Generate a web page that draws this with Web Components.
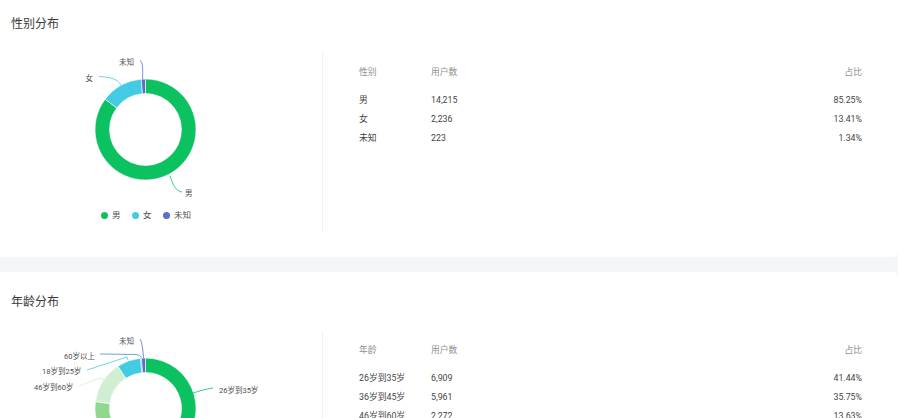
<!DOCTYPE html>
<html lang="zh">
<head>
<meta charset="utf-8">
<style>
html,body{margin:0;height:418px;overflow:hidden;background:#fff}
body{font-family:Roboto,"Noto Sans CJK SC",sans-serif;color:#333}
</style>
</head>
<body>
<stat-page>
  <stat-card title-text="性别分布">
    <donut-chart slot="chart" config="gender"></donut-chart>
    <stat-table slot="table" head="性别" config="gender"></stat-table>
  </stat-card>
  <stat-card title-text="年龄分布">
    <donut-chart slot="chart" config="age"></donut-chart>
    <stat-table slot="table" head="年龄" config="age"></stat-table>
  </stat-card>
</stat-page>
<script>
const DATA={
 gender:{
  top:53,cx:145.5,cy:129.5,legend:true,
  rows:[["男","14,215","85.25%"],["女","2,236","13.41%"],["未知","223","1.34%"]],
  segs:[[85.25,"#0cc160"],[13.41,"#43cbe3"],[1.34,"#5b6fc9"]],
  labels:[
   {t:"男",x:185,y:196,d:"M170 176C173 184 175 191 182 192",c:"#0cc160"},
   {t:"女",x:85.5,y:81,d:"M121 85C118 79 110 77 99 76.500",c:"#43cbe3"},
   {t:"未知",x:119,y:65,d:"M142.500 79C143 70 143 62 140 60.500",c:"#5b6fc9"}
  ]},
 age:{
  top:331,cx:145.5,cy:408.5,legend:false,
  rows:[["26岁到35岁","6,909","41.44%"],["36岁到45岁","5,961","35.75%"],["46岁到60岁","2,272","13.63%"]],
  segs:[[41.44,"#0cc160"],[35.75,"#8fd98f"],[13.63,"#d0eed2"],[7.6,"#43cbe3"],[0.3,"#3f8fd0"],[1.28,"#5b6fc9"]],
  labels:[
   {t:"26岁到35岁",x:219,y:393,d:"M193 393L205 389.500L213 388",c:"#0cc160"},
   {t:"46岁到60岁",x:34,y:390,d:"M79 386L100 378L105 380",c:"#d0eed2"},
   {t:"18岁到25岁",x:42,y:374,d:"M87 370L127 357L128 360",c:"#43cbe3"},
   {t:"60岁以上",x:64,y:359,d:"M100 354L136 354.500C139 355 141 356 141.500 358",c:"#3f8fd0"},
   {t:"未知",x:119,y:344,d:"M140 339C142 342 143 350 143.500 358",c:"#5b6fc9"}
  ]}
};
class StatPage extends HTMLElement{
 constructor(){super();this.attachShadow({mode:"open"}).innerHTML=`<style>
 :host{display:block;width:898px;height:418px;overflow:hidden;background:#f5f6f8}
 .scroll{display:flex;flex-direction:column;gap:15px;margin-top:-6px}
 ::slotted(stat-card){flex:none}
 </style><div class="scroll"><slot></slot></div>`}
}
class StatCard extends HTMLElement{
 constructor(){super();const r=this.attachShadow({mode:"open"});r.innerHTML=`<style>
 :host{display:block;height:263px;background:#fff;border-radius:0 5px 5px 0;box-sizing:border-box}
 h2{margin:0;padding:23px 0 0 11px;height:59px;box-sizing:border-box;font:400 12px/15px Roboto,"Noto Sans CJK SC",sans-serif;color:#3a3a3a}
 .body{display:flex;height:180px}
 .left{width:322px;flex:none;border-right:1px solid #eef0f2;height:180px}
 .right{flex:1;min-width:0;padding:0 36px}
 </style><h2></h2><div class="body"><div class="left"><slot name="chart"></slot></div><div class="right"><slot name="table"></slot></div></div>`;
 }
 connectedCallback(){this.shadowRoot.querySelector("h2").textContent=this.getAttribute("title-text")}
}
class DonutChart extends HTMLElement{
 constructor(){super();this.attachShadow({mode:"open"})}
 connectedCallback(){
  const cfg=DATA[this.getAttribute("config")];
  const top=cfg.top;
  const R=50.5,r=36;
  let paths="",a=0;
  const pt=(rad,ang)=>[cfg.cx+rad*Math.sin(ang),cfg.cy+(-rad*Math.cos(ang))].map(v=>v.toFixed(2)).join(" ");
  const total=cfg.segs.reduce((s,x)=>s+x[0],0);
  for(const [v,c] of cfg.segs){
   const b=a+v/total*2*Math.PI,lg=b-a>Math.PI?1:0;
   paths+=`<path d="M${pt(R,a)}A${R} ${R} 0 ${lg} 1 ${pt(R,b)}L${pt(r,b)}A${r} ${r} 0 ${lg} 0 ${pt(r,a)}Z" fill="${c}" stroke="#fff" stroke-width=".6"/>`;
   a=b;
  }
  const labels=cfg.labels.map(l=>`<path d="${l.d}" fill="none" stroke="${l.c}" stroke-width=".8"/><text x="${l.x}" y="${l.y}">${l.t}</text>`).join("");
  const legend=cfg.legend?`<div class="legend">${[["男","#0cc160"],["女","#43cbe3"],["未知","#5b6fc9"]].map(([t,c])=>`<span class="it"><i style="background:${c}"></i>${t}</span>`).join("")}</div>`:"";
  this.shadowRoot.innerHTML=`<style>
  :host{display:block;height:180px;position:relative}
  svg{display:block;width:322px;height:180px;overflow:visible}
  text{font:7.5px Roboto,"Noto Sans CJK SC",sans-serif;fill:#505050}
  .legend{position:absolute;left:101px;top:156px;display:flex;gap:11.5px;font:8.5px/12px Roboto,"Noto Sans CJK SC",sans-serif;color:#505050}
  .it{display:flex;align-items:center;gap:4px}
  i{width:7px;height:7px;border-radius:50%;display:block}
  </style><svg viewBox="0 ${top} 322 180"><g>${paths}${labels}</g></svg>${legend}`;
 }
}
class StatTable extends HTMLElement{
 constructor(){super();this.attachShadow({mode:"open"})}
 connectedCallback(){
  const cfg=DATA[this.getAttribute("config")];
  const cell=r=>`<span>${r[0]}</span><span>${r[1]}</span><span class="end">${r[2]}</span>`;
  this.shadowRoot.innerHTML=`<style>
  :host{display:block;font:8.8px/19px Roboto,"Noto Sans CJK SC",sans-serif;color:#444}
  .row{display:grid;grid-template-columns:72px 1fr auto}
  .head{color:#919191;padding-top:9.500px;height:28px}
  .end{text-align:right}
  </style><div class="row head">${cell([this.getAttribute("head"),"用户数","占比"])}</div>${cfg.rows.map(r=>`<div class="row">${cell(r)}</div>`).join("")}`;
 }
}
customElements.define("stat-page",StatPage);
customElements.define("stat-card",StatCard);
customElements.define("donut-chart",DonutChart);
customElements.define("stat-table",StatTable);
</script>
</body>
</html>
